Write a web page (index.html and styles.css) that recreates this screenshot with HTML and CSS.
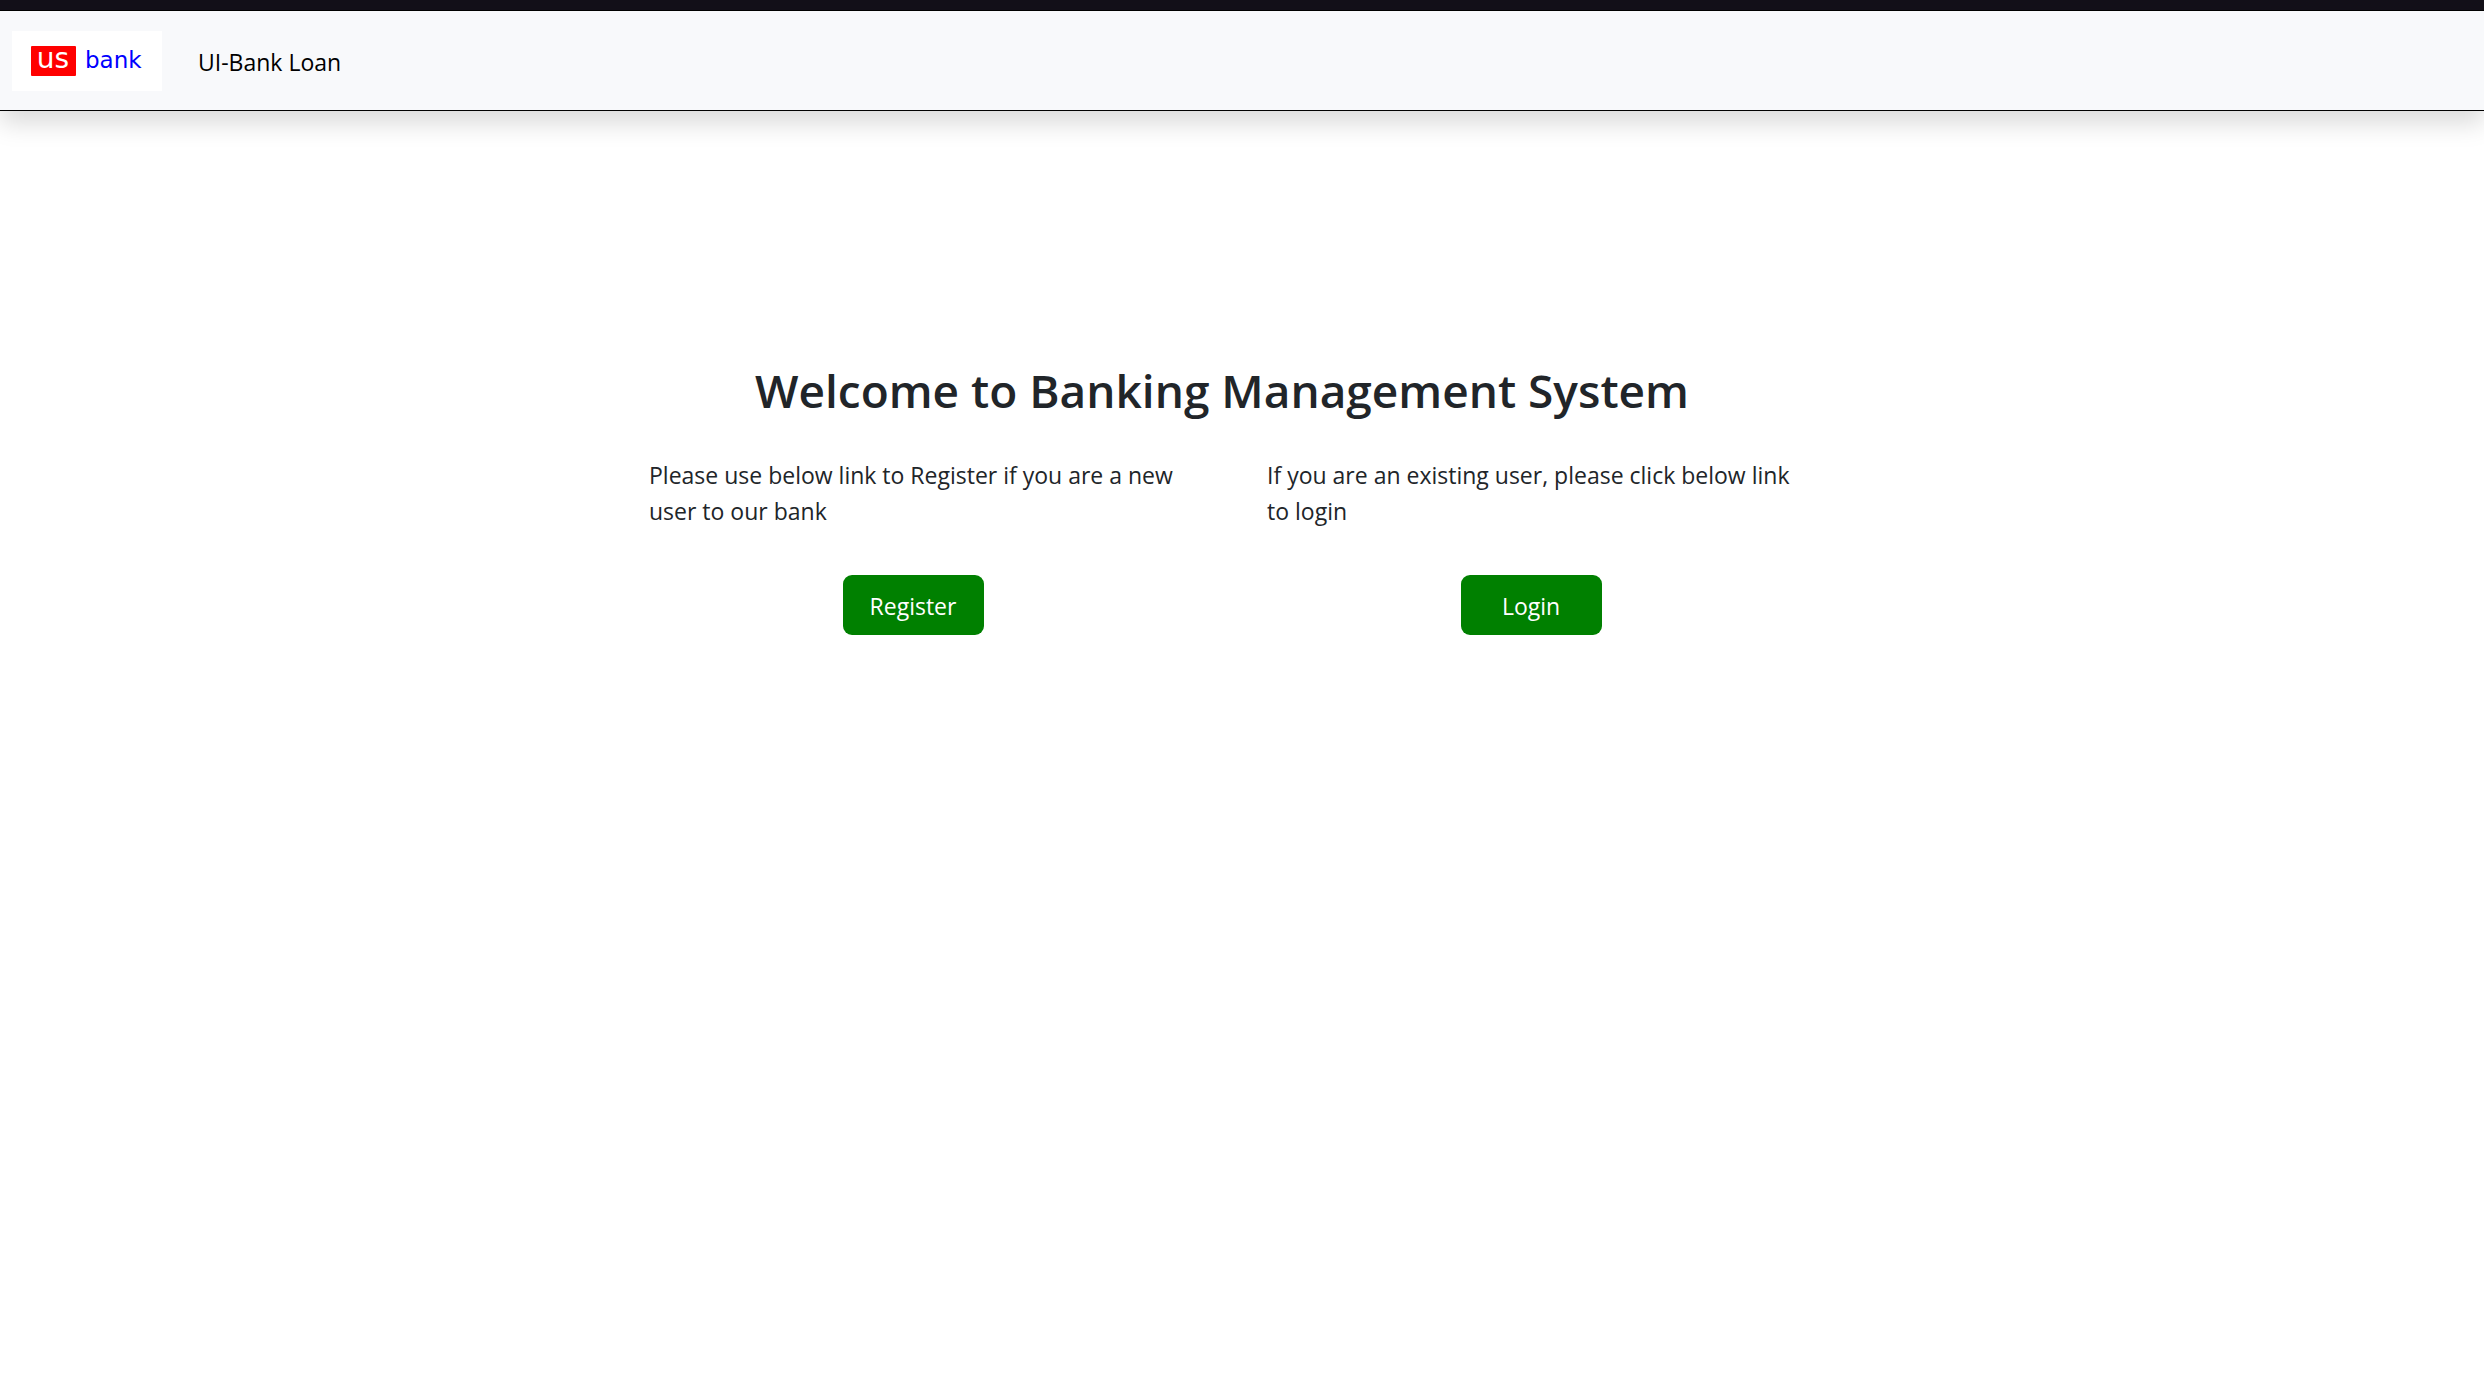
FILE: index.html
```html
<!DOCTYPE html>
<html lang="en">
<head>
<meta charset="utf-8">
<title>UI-Bank Loan</title>
<meta name="viewport" content="width=device-width, initial-scale=1">
<link rel="stylesheet" href="styles.css">
</head>
<body>
<header class="navbar">
  <a class="brand" href="#" aria-label="US bank home">
    <svg class="logo" width="150" height="60" viewBox="0 0 150 60" role="img" aria-label="US bank">
      <rect width="150" height="60" fill="#fff"/>
      <rect x="19" y="15" width="45" height="30" rx="1" fill="#f00"/>
      <text class="logo-us" x="41" y="37">us</text>
      <text class="logo-bank" x="73" y="37">bank</text>
    </svg>
  </a>
  <a class="nav-link" href="#">UI-Bank Loan</a>
</header>
<main class="welcome">
  <h1 class="title">Welcome to Banking Management System</h1>
  <div class="options">
    <section class="option">
      <p class="text">Please use below link to Register if you are a new user to our bank</p>
      <button class="btn" type="button">Register</button>
    </section>
    <section class="option">
      <p class="text">If you are an existing user, please click below link to login</p>
      <button class="btn" type="button">Login</button>
    </section>
  </div>
</main>
</body>
</html>
```
FILE: styles.css
```css
* {
  box-sizing: border-box;
}

body {
  margin: 0;
  border-top: 10px solid #120f18;
  background: #fff;
  color: #212529;
  font-family: "Segoe UI", "Open Sans", "Noto Sans", sans-serif;
  font-size: 23px;
  line-height: 36px;
}

.navbar {
  display: flex;
  align-items: center;
  gap: 36px;
  padding: 20px 12px 19px;
  border-top: 1px solid #000;
  border-bottom: 1px solid #000;
  background: #f8f9fb;
  box-shadow: 0 12px 24px rgba(0, 0, 0, 0.15);
}

.brand,
.logo {
  display: block;
}

.logo-us,
.logo-bank {
  font-family: "DejaVu Sans", sans-serif;
}

.logo-us {
  fill: #fff;
  font-size: 28px;
  text-anchor: middle;
}

.logo-bank {
  fill: #00f;
  font-size: 23px;
}

.nav-link {
  padding-top: 2px;
  color: #000;
  text-decoration: none;
}

.welcome {
  max-width: 1186px;
  margin: 0 auto;
  padding: 250px 40px 0 0;
}

.title {
  margin: 0 0 38px;
  font-size: 46px;
  font-weight: 600;
  line-height: 58px;
  text-align: center;
}

.options {
  display: grid;
  grid-template-columns: 1fr 1fr;
  gap: 90px;
}

.option {
  display: flex;
  flex-direction: column;
  align-items: center;
}

.text {
  width: 100%;
  margin: 0 0 46px;
}

.btn {
  width: 141px;
  height: 60px;
  padding: 2px 0 0;
  border: 0;
  border-radius: 9px;
  background: #008000;
  color: #fff;
  font: inherit;
  cursor: pointer;
}
```
